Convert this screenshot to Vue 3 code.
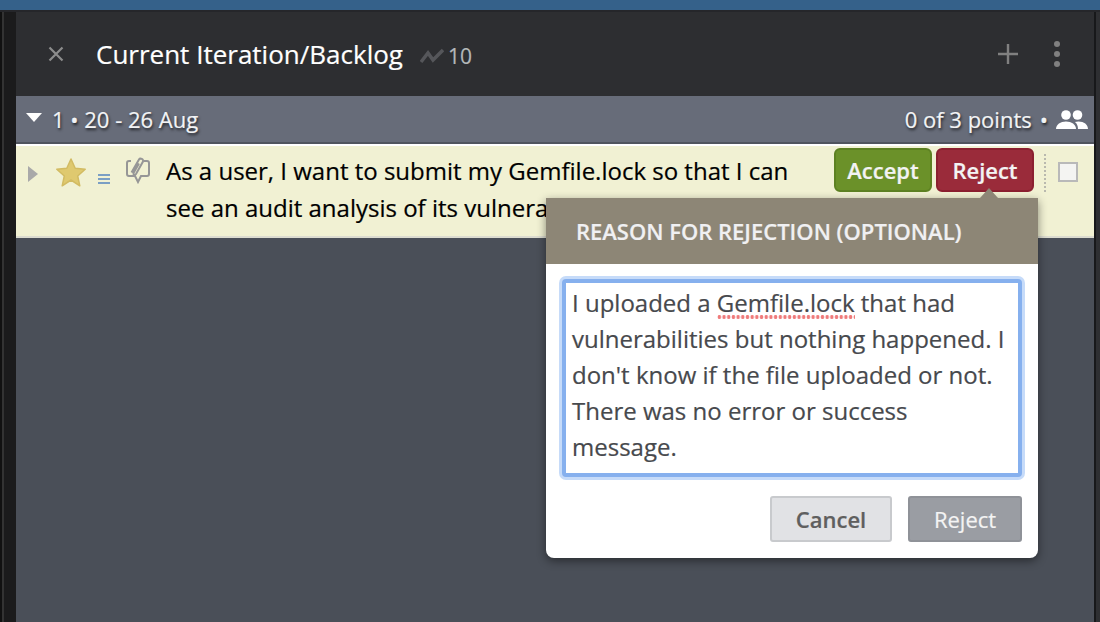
<template>
    <div class="page">
        <div class="top-strip"></div>
        <div class="workspace">
            <div class="left-rail"></div>
            <div class="panel">
                <header class="panel-header">
                    <svg class="close-icon" viewBox="0 0 16 16">
                        <path d="M1.500 1.500l13 13M14.500 1.500l-13 13"/>
                    </svg>
                    <h1 class="panel-title">Current Iteration/Backlog</h1>
                    <svg class="velocity-icon" viewBox="0 0 24 16">
                        <path d="M1 14l7-9 5 7 10-10"/>
                    </svg>
                    <span class="velocity">10</span>
                    <svg class="plus-icon" viewBox="0 0 20 20">
                        <path d="M10 0v20M0 10h20"/>
                    </svg>
                    <div class="more-icon"><i></i><i></i><i></i></div>
                </header>

                <div class="iteration-bar">
                    <span class="caret-down"></span>
                    <span class="iteration-name">1 • 20 - 26 Aug</span>
                    <span class="iteration-points">0 of 3 points</span>
                    <span class="iteration-dot">•</span>
                    <svg class="team-icon" viewBox="0 0 32 22">
                        <circle cx="10" cy="7" r="4.800"/>
                        <circle cx="21.500" cy="7" r="4.800"/>
                        <path d="M0 21c0-4.500 4.500-7.500 10-7.500s10 3 10 7.500z"/>
                        <path d="M22 21h10c0-4.500-4-7.500-9.500-7.500-1.300 0-2.500.2-3.600.5 2.100 1.600 3.100 4 3.100 7z"/>
                    </svg>
                </div>

                <div class="story">
                    <span class="caret-right"></span>
                    <svg class="star-icon" viewBox="0 0 32 30">
                        <path d="M16 2l4.200 9.200 10 1.100-7.500 6.700 2.100 9.800L16 23l-8.800 5.800 2.100-9.800-7.500-6.700 10-1.100z"/>
                    </svg>
                    <div class="lines-icon"><i></i><i></i><i></i></div>
                    <svg class="comment-icon" viewBox="0 0 26 28">
                        <path d="M6 5H4a2 2 0 0 0-2 2v11a2 2 0 0 0 2 2h6l3 6 3-6h6a2 2 0 0 0 2-2V7a2 2 0 0 0-2-2h-3"/>
                        <path d="M6.500 16.500L14 3.500c1-1.700 5-.5 4 2L11 18c-1 1.500-3 .5-2.500-1L14 7.500"/>
                    </svg>
                    <p class="story-text">As a user, I want to submit my Gemfile.lock so that I can see an audit analysis of its vulnerabilities.</p>
                    <div class="story-actions">
                        <button class="btn-accept">Accept</button>
                        <button class="btn-reject">Reject</button>
                    </div>
                    <div class="divider"></div>
                    <span class="checkbox"></span>

                    <div class="popover">
                        <span class="popover-arrow"></span>
                        <div class="popover-head">REASON FOR REJECTION (OPTIONAL)</div>
                        <div class="popover-body">
                            <div class="reason-box">I uploaded a <span class="misspelled">Gemfile.lock</span> that had vulnerabilities but nothing happened. I don't know if the file uploaded or not. There was no error or success message.</div>
                            <div class="popover-actions">
                                <button class="btn-cancel">Cancel</button>
                                <button class="btn-confirm">Reject</button>
                            </div>
                        </div>
                    </div>
                </div>

                <div class="panel-rest"></div>
            </div>
            <div class="right-rail"></div>
        </div>
    </div>
</template>

<script setup>
</script>

<style>
html, body {
    margin: 0;
    height: 100%;
    overflow: hidden;
}
</style>

<style scoped>
.page {
    width: 1100px;
    height: 622px;
    display: flex;
    flex-direction: column;
    overflow: hidden;
    background: #2b2c2f;
    font-family: "Open Sans", "Noto Sans", sans-serif;
    -webkit-text-stroke: .2px;
}

.top-strip {
    height: 10px;
    background: #35618a;
    flex: none;
}

.workspace {
    flex: 1;
    display: flex;
    min-height: 0;
    border-top: 2px solid #25262a;
}

.left-rail {
    width: 16px;
    flex: none;
    background: linear-gradient(90deg, #111 0, #111 2px, #333 2px, #333 4px, #1b1b1c 4px);
}

.right-rail {
    width: 6px;
    flex: none;
    background: linear-gradient(90deg, #17181a 0, #17181a 2px, #2e2f32 2px);
}

.panel {
    flex: 1;
    min-width: 0;
    display: flex;
    flex-direction: column;
}

.panel-header {
    height: 84px;
    flex: none;
    display: flex;
    align-items: center;
    background: #2d2e31;
    box-sizing: border-box;
    padding: 0 0 0 32px;
}

.close-icon {
    width: 16px;
    height: 16px;
    fill: none;
    stroke: #8c8c8c;
    stroke-width: 2.200;
}

.panel-title {
    margin: 0 0 0 32px;
    font-size: 26px;
    font-weight: 400;
    color: #fff;
}

.velocity-icon {
    width: 24px;
    height: 16px;
    margin: 3px 0 0 17px;
    fill: none;
    stroke: #55565a;
    stroke-width: 3.500;
}

.velocity {
    margin: 3px 0 0 4px;
    font-size: 21px;
    color: #b4b7ba;
}

.plus-icon {
    width: 20px;
    height: 20px;
    margin-left: auto;
    fill: none;
    stroke: #808080;
    stroke-width: 2.400;
}

.more-icon {
    display: flex;
    flex-direction: column;
    gap: 4px;
    margin: 0 34px 0 36px;
}

.more-icon i {
    width: 6px;
    height: 6px;
    border-radius: 50%;
    background: #808080;
}

.iteration-bar {
    height: 48px;
    flex: none;
    display: flex;
    align-items: center;
    box-sizing: border-box;
    padding: 0 6px 0 10px;
    background: #676c79;
    border-bottom: 2px solid #50545e;
    color: #f2f3f5;
    font-size: 22px;
    text-shadow: 1px 2px 3px rgba(0, 0, 0, .7);
}

.caret-down {
    width: 0;
    height: 0;
    border-left: 8px solid transparent;
    border-right: 8px solid transparent;
    border-top: 9px solid #fff;
    margin-top: -3px;
}

.iteration-name {
    margin-left: 10px;
}

.iteration-points {
    margin-left: auto;
}

.iteration-dot {
    margin-left: 8px;
}

.team-icon {
    width: 32px;
    height: 22px;
    margin-left: 8px;
    fill: #fff;
}

.story {
    position: relative;
    height: 94px;
    flex: none;
    display: flex;
    align-items: flex-start;
    box-sizing: border-box;
    background: #f1f1d3;
    border-top: 2px solid #fff;
    border-bottom: 2px solid #dcdcd0;
}

.caret-right {
    width: 0;
    height: 0;
    margin: 20px 0 0 12px;
    border-top: 8px solid transparent;
    border-bottom: 8px solid transparent;
    border-left: 10px solid #a9a9a9;
    flex: none;
}

.star-icon {
    width: 32px;
    height: 30px;
    margin: 11px 0 0 17px;
    flex: none;
    fill: #dfc96f;
    stroke: #d2bb62;
    stroke-width: 1.500;
    stroke-linejoin: round;
}

.lines-icon {
    display: flex;
    flex-direction: column;
    gap: 2px;
    width: 12px;
    margin: 28px 0 0 11px;
    flex: none;
}

.lines-icon i {
    height: 2px;
    background: #7b9fc4;
}

.comment-icon {
    width: 26px;
    height: 28px;
    margin: 10px 0 0 15px;
    flex: none;
    fill: none;
    stroke: #969696;
    stroke-width: 2;
}

.story-text {
    width: 650px;
    margin: 6px 0 0 15px;
    flex: none;
    font-size: 24px;
    line-height: 37px;
    color: #000;
}

.story-actions {
    position: absolute;
    top: 2px;
    left: 818px;
    display: flex;
    gap: 4px;
}

.story-actions button {
    width: 98px;
    height: 44px;
    padding: 0;
    border-radius: 6px;
    color: #f3f3f3;
    font-family: inherit;
    font-size: 22px;
    font-weight: 600;
}

.btn-accept {
    background: #6b9129;
    border: 2px solid #5d8122;
}

.btn-reject {
    background: #9a2b3a;
    border: 2px solid #8b2030;
}

.divider {
    position: absolute;
    top: 8px;
    left: 1028px;
    height: 38px;
    border-left: 2px dotted #b9b9ae;
}

.checkbox {
    position: absolute;
    top: 16px;
    left: 1042px;
    width: 20px;
    height: 20px;
    box-sizing: border-box;
    background: #f4f4f2;
    border: 2px solid #b9b9b9;
}

.popover {
    position: absolute;
    z-index: 2;
    top: 52px;
    left: 530px;
    width: 492px;
    height: 360px;
    display: flex;
    flex-direction: column;
    background: #fff;
    border-radius: 0 0 8px 8px;
    box-shadow: 0 3px 10px rgba(0, 0, 0, .45);
}

.popover-arrow {
    position: absolute;
    top: -10px;
    left: 434px;
    border-left: 9px solid transparent;
    border-right: 9px solid transparent;
    border-bottom: 10px solid #8d8676;
}

.popover-head {
    height: 66px;
    flex: none;
    box-sizing: border-box;
    padding: 18px 0 0 30px;
    background: #8d8676;
    color: #f0f0f2;
    font-size: 22px;
    line-height: 30px;
    font-weight: 600;
}

.popover-body {
    flex: 1;
    display: flex;
    flex-direction: column;
    box-sizing: border-box;
    padding: 15px 16px 0;
}

.reason-box {
    width: 460px;
    height: 198px;
    box-sizing: border-box;
    padding: 2px 6px;
    background: #fff;
    border: 4px solid #86b0ee;
    border-radius: 4px;
    box-shadow: 0 0 0 3px #c6dbf9;
    color: #47494d;
    font-size: 24px;
    line-height: 36px;
}

.misspelled {
    background: radial-gradient(circle, #ef7b7b 1.700px, transparent 2px) 0 100% / 4.700px 4px repeat-x;
}

.popover-actions {
    display: flex;
    justify-content: flex-end;
    gap: 16px;
    margin-top: 19px;
}

.popover-actions button {
    height: 46px;
    padding: 0;
    border-radius: 3px;
    font-family: inherit;
    font-size: 22px;
}

.btn-cancel {
    width: 122px;
    background: #e1e2e5;
    border: 2px solid #c8cacd;
    color: #5f5f5f;
    font-weight: 600;
}

.btn-confirm {
    width: 114px;
    background: #9a9da3;
    border: 2px solid #8f9298;
    color: #f4f4f4;
    font-weight: 400;
}

.panel-rest {
    flex: 1;
    background: #4a4f58;
}
</style>
